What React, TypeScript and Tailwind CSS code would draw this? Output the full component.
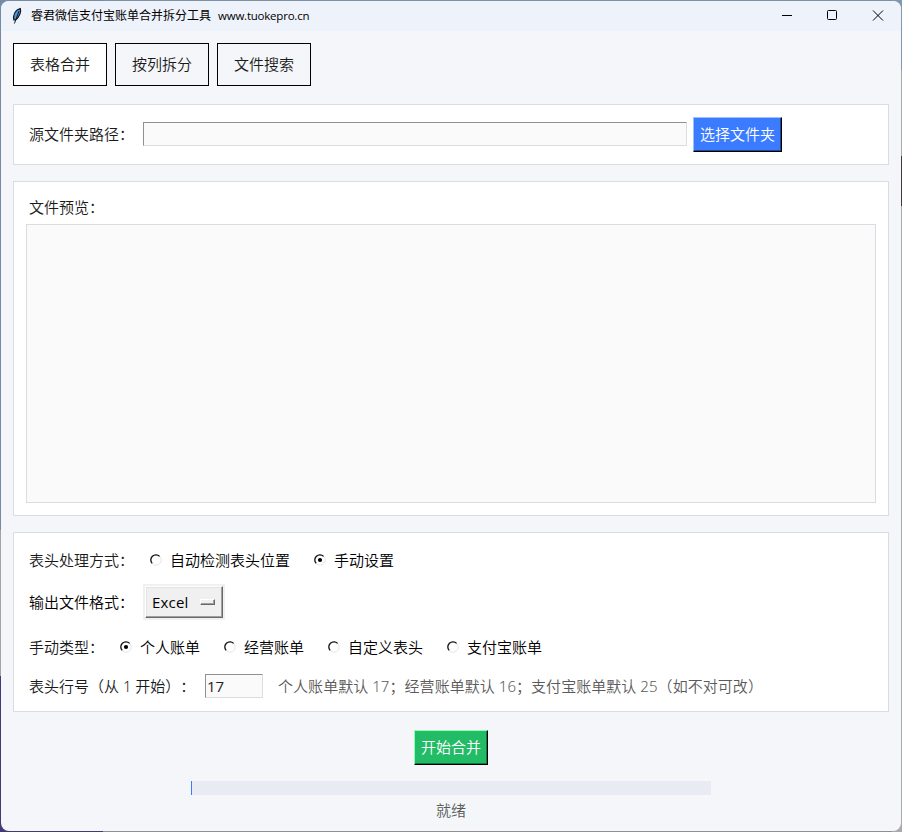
import React from 'react';

const LABEL = 'whitespace-pre text-[15px] leading-5 text-[#1a1a1a] [text-spacing-trim:space-all]';

function Radio({ label, checked = false }: { label: string; checked?: boolean }) {
  return (
    <label className="flex h-5 items-center gap-2 whitespace-nowrap pl-px text-[15px] leading-5 text-black">
      <svg width="12" height="12" viewBox="0 0 12 12" className="shrink-0">
        <circle cx="6" cy="6" r="5.2" fill="#fff" stroke="#e6e6e6" />
        <path d="M2.2 9.4A5 5 0 0 1 9.6 2.4" fill="none" stroke="#111" strokeWidth="1.3" />
        {checked && <circle cx="6" cy="6" r="2.1" fill="#000" />}
      </svg>
      <span>{label}</span>
    </label>
  );
}

function Tab({ label, active = false }: { label: string; active?: boolean }) {
  return (
    <button
      className={`h-[43px] w-[94px] border border-black pb-0.5 text-[15px] font-[350] leading-5 text-[#1a1a1a] ${active ? 'bg-white' : 'bg-[#f4f6f9]'}`}
    >
      {label}
    </button>
  );
}

export default function App() {
  return (
    <div className="flex h-[832px] w-[902px] overflow-hidden bg-[#8f8f94] bg-[linear-gradient(#748ba2_0_530px,#a3a2a5_530px_676px,#403a78_676px),linear-gradient(#8199b0_0_70px,#aaaaac_70px_156px,#3c3a3c_156px_206px,#aaa_206px),linear-gradient(#7d91a6_0_10px,#8f8f94_10px)] bg-[size:103px_100%,10px_100%,100%_100%] bg-[position:left,right,left] bg-no-repeat p-px font-['Noto_Sans','Noto_Sans_CJK_SC',sans-serif] font-[350]">
      <div className="flex h-[830px] w-[900px] flex-col overflow-hidden rounded-lg bg-[#f4f6f9]">
        <header className="flex h-[30px] shrink-0 items-center bg-[#eef2fa] pl-[10px]">
          <svg width="12" height="18" viewBox="0 0 12 18">
            <path d="M2.8 13C1.8 8.5 3.8 3 9.3 1.5C10.5 4.5 8.8 9.5 4.6 13Z" fill="#4f94dc" stroke="#111" strokeWidth="1.1" />
            <path d="M8 4L3.4 16.5" stroke="#101820" strokeWidth="1" />
          </svg>
          <h1 className="ml-2 flex gap-[7px] whitespace-nowrap text-xs font-normal leading-4 text-black">
            <span>睿君微信支付宝账单合并拆分工具</span>
            <span className="text-[11.5px] tracking-[-0.22px] font-['Open_Sans','Noto_Sans',sans-serif]">www.tuokepro.cn</span>
          </h1>
          <div className="ml-auto mr-[17px] flex items-center gap-[34px] text-black">
            <svg width="12" height="12" viewBox="0 0 12 12" fill="none" stroke="currentColor"><path d="M2 5.5h10" /></svg>
            <svg width="12" height="12" viewBox="0 0 12 12" fill="none" stroke="currentColor"><rect x="1.5" y="0.5" width="9" height="9" rx="1" /></svg>
            <svg width="12" height="12" viewBox="0 0 12 12" fill="none" stroke="currentColor"><path d="M1 0.5l10 10M11 0.5L1 10.5" /></svg>
          </div>
        </header>

        <main className="flex flex-col px-3 pt-3">
          <nav className="flex gap-2">
            <Tab label="表格合并" active />
            <Tab label="按列拆分" />
            <Tab label="文件搜索" />
          </nav>

          <section className="mt-[18px] flex h-[61px] items-center border border-[#d9dce3] bg-white pl-[15px]">
            <span className={`${LABEL} w-[114px] pb-0.5`}>源文件夹路径：</span>
            <div className="mb-px h-6 w-[544px] border border-b-[#dcdcdc] border-l-[#909090] border-r-[#dcdcdc] border-t-[#909090] bg-[#fafafa]" />
            <button className="ml-1.5 h-[35px] w-[89px] border border-b-black border-l-[#9dbdff] border-r-black border-t-[#9dbdff] bg-[#3a7bff] pb-0.5 text-[15px] leading-5 text-white shadow-[inset_-1px_-1px_0_#204795]">
              选择文件夹
            </button>
          </section>

          <section className="mt-4 flex h-[335px] flex-col border border-[#d9dce3] bg-white px-3 pb-3 pt-[15px]">
            <span className={`${LABEL} ml-[3px]`}>文件预览：</span>
            <div className="mt-[7px] flex-1 border border-[#d9dce3] bg-[#fafafa]" />
          </section>

          <section className="mt-4 flex h-[180px] flex-col border border-[#d9dce3] bg-white pl-[15px] pt-[17px]">
            <div className="flex h-5 items-center">
              <span className={`${LABEL} w-[120px]`}>表头处理方式：</span>
              <Radio label="自动检测表头位置" />
              <div className="w-[23px]" />
              <Radio label="手动设置" checked />
            </div>
            <div className="mt-[14px] flex h-[36px] items-center">
              <span className={`${LABEL} w-[114px] !text-black`}>输出文件格式：</span>
              <div className="h-[36px] w-[82px] bg-[#f0f0f0] p-[2px]">
                <div className="flex h-8 w-[78px] items-center border border-b-[#696969] border-l-white border-r-[#696969] border-t-white pl-1.5 text-[15px] text-black shadow-[inset_-1px_-1px_0_#a0a0a0,inset_1px_1px_0_#e3e3e3]">
                  <span className="w-[48px] font-['Open_Sans','Noto_Sans',sans-serif] font-normal tracking-[0.2px]">Excel</span>
                  <span className="h-1.5 w-[15px] border border-b-[#696969] border-l-white border-r-[#696969] border-t-white shadow-[inset_-1px_-1px_0_#a0a0a0]" />
                </div>
              </div>
            </div>
            <div className="mt-[17px] flex h-5 items-center">
              <span className={`${LABEL} w-[90px]`}>手动类型：</span>
              <div className="flex gap-[23px]">
                <Radio label="个人账单" checked />
                <Radio label="经营账单" />
                <Radio label="自定义表头" />
                <Radio label="支付宝账单" />
              </div>
            </div>
            <div className="mt-[17px] flex h-6 items-center">
              <span className={`${LABEL} w-[176px]`}>表头行号（从 1 开始）：</span>
              <div className="h-6 w-[58px] border border-b-[#dcdcdc] border-l-[#909090] border-r-[#dcdcdc] border-t-[#909090] bg-[#fafafa] pl-px font-['Open_Sans','Noto_Sans',sans-serif] text-[15px] font-normal leading-[22px] text-[#222]">17</div>
              <span className="ml-[15px] whitespace-pre text-[15px] leading-5 tracking-[0.05px] text-[#5a5a5a] [text-spacing-trim:space-all]">个人账单默认 17；经营账单默认 16；支付宝账单默认 25（如不对可改）</span>
            </div>
          </section>

          <div className="mt-[18px] flex flex-col items-center">
            <button className="h-[35px] w-[74px] border border-b-black border-l-[#8bffb5] border-r-black border-t-[#8bffb5] bg-[#22bb66] pb-0.5 text-[15px] leading-5 text-white shadow-[inset_-1px_-1px_0_#137a3e]">
              开始合并
            </button>
            <div className="mt-4 h-[14px] w-[520px] border-l border-[#3a7bff] bg-[#e8ebf4]" />
            <p className="mt-[5px] text-[15px] leading-5 text-[#5a5a5a]">就绪</p>
          </div>
        </main>
      </div>
    </div>
  );
}
